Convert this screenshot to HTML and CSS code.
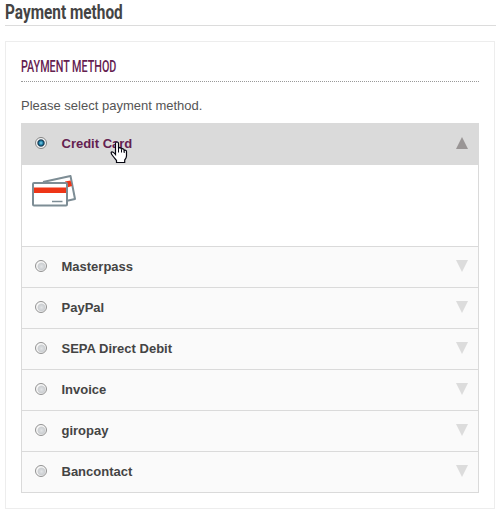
FILE: index.html
```html
<!DOCTYPE html>
<html lang="en">
<head>
<meta charset="utf-8">
<title>Payment method</title>
<link rel="stylesheet" href="styles.css">
</head>
<body>
<main class="page">
  <h1 class="title"><span class="title-text">Payment method</span></h1>
  <section class="panel">
    <h2 class="legend"><span class="legend-text">PAYMENT METHOD</span></h2>
    <p class="hint">Please select payment method.</p>
    <ul class="methods">
      <li class="method open">
        <label class="row"><span class="radio checked"></span><span class="name">Credit Card</span><svg class="arrow" viewBox="0 0 12 12"><path d="M6 0L12 12H0Z"/></svg></label>
        <div class="content">
          <svg class="cards" width="46" height="36" viewBox="0 0 46 36">
            <g stroke="#7d8d95" stroke-width="2" stroke-linejoin="round">
              <path d="M12 8L39.5 2L44 25L35 27" fill="#fff"/>
              <path d="M34 7.500L39.500 6.500L41 12L36 13.500Z" fill="#ee3517" stroke="none"/>
              <rect x="2" y="9" width="34" height="22.5" rx="1" fill="#fff"/>
              <path d="M3 13.500H35V19H3Z" fill="#ee3517" stroke="none"/>
              <path d="M21 27.5H31.5" stroke-width="1.5"/>
            </g>
          </svg>
        </div>
      </li>
      <li class="method"><label class="row"><span class="radio"></span><span class="name">Masterpass</span><svg class="arrow" viewBox="0 0 12 12"><path d="M0 0H12L6 12Z"/></svg></label></li>
      <li class="method"><label class="row"><span class="radio"></span><span class="name">PayPal</span><svg class="arrow" viewBox="0 0 12 12"><path d="M0 0H12L6 12Z"/></svg></label></li>
      <li class="method"><label class="row"><span class="radio"></span><span class="name">SEPA Direct Debit</span><svg class="arrow" viewBox="0 0 12 12"><path d="M0 0H12L6 12Z"/></svg></label></li>
      <li class="method"><label class="row"><span class="radio"></span><span class="name">Invoice</span><svg class="arrow" viewBox="0 0 12 12"><path d="M0 0H12L6 12Z"/></svg></label></li>
      <li class="method"><label class="row"><span class="radio"></span><span class="name">giropay</span><svg class="arrow" viewBox="0 0 12 12"><path d="M0 0H12L6 12Z"/></svg></label></li>
      <li class="method"><label class="row"><span class="radio"></span><span class="name">Bancontact</span><svg class="arrow" viewBox="0 0 12 12"><path d="M0 0H12L6 12Z"/></svg></label></li>
    </ul>
  </section>
</main>
<svg class="cursor" width="18" height="23" viewBox="0 0 18 23"><path d="M5.5 13.5V2.5Q5.5 1 7 1T8.5 2.500V7.500Q9 6.500 10 6.700Q11.500 7 11.500 8.500Q12 7.500 13 7.800Q14.200 8.200 14.200 9.500Q15 8.800 16 9.500Q16.700 10 16.500 11.500V15Q16.500 17 14.700 19V21.500H6.500V19.500Q4 16.500 2.500 14.500Q.5 12 1.500 11Q3 10.300 5.500 13.500Z" fill="#fff" stroke="#050510" stroke-width="1.200"/><path d="M8.500 7V11.500M11.500 8.500V11.500M14.200 9.500V12" stroke="#050510" fill="none"/></svg>
</body>
</html>
```
FILE: styles.css
```css
* { box-sizing: border-box; }
body {
  margin: 0;
  background: #fff;
  color: #444;
  font: 13px/18px "Liberation Sans", Arial, sans-serif;
}
.page { padding-left: 5px; }
.title {
  height: 26px;
  margin: 0 0 15px;
  border-bottom: 1px solid #dcdcdc;
  font: bold 20.5px/24px Roboto, sans-serif;
}
.title-text, .legend-text {
  display: inline-block;
  transform-origin: 0 50%;
  white-space: nowrap;
}
.title-text { transform: scaleX(.75); }
.panel {
  width: 490px;
  height: 468px;
  padding: 15px 15px 0;
  border: 1px solid #ededed;
}
.legend {
  height: 25px;
  margin: 0 0 15px;
  border-bottom: 1px dotted #999;
  color: #642150;
  font: 500 16.5px/19px Roboto, sans-serif;
}
.legend-text { transform: scaleX(.652); }
.hint { margin: 0 0 8px; color: #555; }
.methods {
  width: 458px;
  margin: 0;
  padding: 0;
  border: 1px solid #dadada;
  list-style: none;
}
.method + .method { border-top: 1px solid #dadada; }
.row {
  display: flex;
  align-items: center;
  height: 40px;
  padding: 0 10px 0 13px;
  background: #fafafa;
  font-weight: bold;
}
.open .row {
  height: 41px;
  padding-bottom: 2px;
  background: #dadada;
  color: #642150;
}
.name { flex: 1; margin-left: 14.5px; }
.radio {
  width: 12px;
  height: 12px;
  margin-bottom: 2px;
  border: 1px solid #929292;
  border-radius: 50%;
  background: radial-gradient(circle at 55% 55%, #e2e4e6 0, #cdd0d3 3px, #d4d6d8 3.6px, #f6f6f6 4.4px);
}
.radio.checked {
  margin-bottom: 1px;
  border-color: #858585;
  background: radial-gradient(circle at 50% 50%, #8bd0ea 0, #248ab2 1.7px, #12354e 3.1px, #f5f5f5 4.2px);
}
.arrow {
  width: 12px;
  height: 12px;
  margin-bottom: 2px;
  fill: #dcdcdc;
}
.open .arrow { fill: #999595; margin-bottom: 1px; }
.content { height: 81px; padding: 9px 0 0 9px; }
.cards { display: block; }
.cursor { position: absolute; left: 110px; top: 141px; }
```
